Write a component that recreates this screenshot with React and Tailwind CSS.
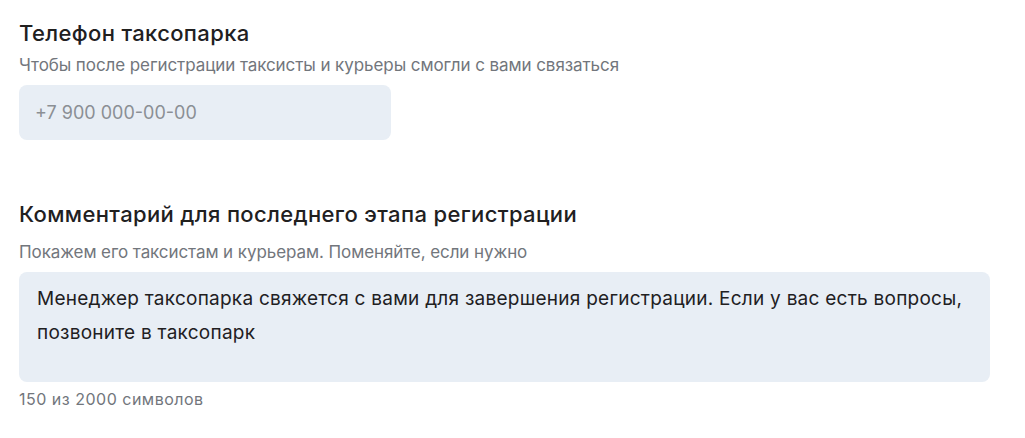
import React from "react";

const Field = ({ title, hint, hintGap, children }) => (
  <div className="flex flex-col">
    <h2 className="text-[22px] leading-[28px] font-medium tracking-[0.35px] text-[#21201f]">{title}</h2>
    <p className={`${hintGap} text-[17px] leading-[22px] tracking-[-0.08px] text-[#72767c]`}>{hint}</p>
    <div className="mt-[9px]">{children}</div>
  </div>
);

export default function App() {
  return (
    <div
      className="w-[1025px] h-[438px] bg-white pl-[19px] pt-[19px]"
      style={{ fontFamily: "Inter, 'Noto Sans', sans-serif" }}
    >
      <Field
        title="Телефон таксопарка"
        hint="Чтобы после регистрации таксисты и курьеры смогли с вами связаться"
        hintGap="mt-[7px]"
      >
        <div className="w-[372px] h-[55px] rounded-[8px] bg-[#e8eef5] flex items-center px-[16px] text-[18px] text-[#8b8f94]">
          +7 900 000-00-00
        </div>
      </Field>

      <div className="mt-[60px]">
        <Field
          title="Комментарий для последнего этапа регистрации"
          hint="Покажем его таксистам и курьерам. Поменяйте, если нужно"
          hintGap="mt-[13px]"
        >
          <div className="w-[971px] h-[110px] rounded-[8px] bg-[#e8eef5] px-[18px] pt-[10px] text-[19px] leading-[34px] tracking-[0.25px] text-[#21201f]">
            Менеджер таксопарка свяжется с вами для завершения регистрации. Если у вас есть вопросы,
            позвоните в таксопарк
          </div>
          <p className="mt-[6px] text-[16px] leading-[22px] tracking-[0.5px] text-[#72767c]">150 из 2000 символов</p>
        </Field>
      </div>
    </div>
  );
}
